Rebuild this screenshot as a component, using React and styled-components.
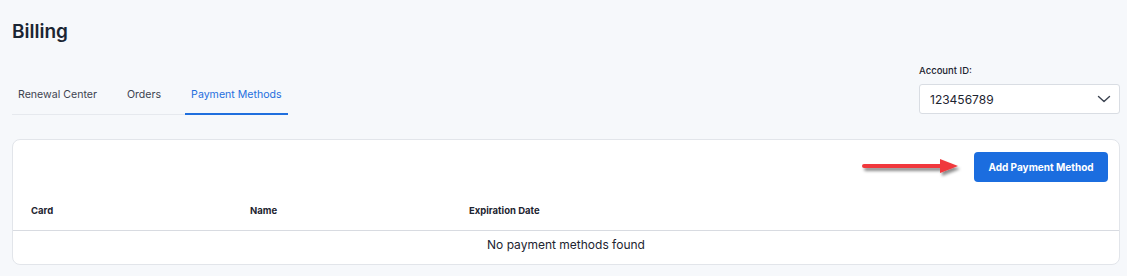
import React from "react";
import styled, { createGlobalStyle } from "styled-components";

const Global = createGlobalStyle`
  html, body { margin: 0; padding: 0; background: #f6f8fb; }
  body { font-family: Inter, "Noto Sans", Arial, sans-serif; color: #1d2430; }
  * { box-sizing: border-box; }
`;

const Page = styled.div`
  padding: 20px 7px 0 12px;
  width: 1127px;
`;

const Title = styled.h1`
  margin: 0;
  font-size: 19px;
  line-height: 24px;
  font-weight: 600;
  color: #1b2533;
`;

const HeaderRow = styled.div`
  display: flex;
  justify-content: space-between;
  align-items: flex-end;
  margin-top: 21px;
`;

const Tabs = styled.div`
  display: flex;
  gap: 18px;
  width: 276px;
  border-bottom: 1px solid #e6e9ee;
  height: 40px;
  margin-bottom: -1px;
`;

const Tab = styled.div`
  padding: 13px 6px 0;
  font-size: 10.6px;
  line-height: 14px;
  color: ${(p) => (p.$active ? "#1f6fde" : "#3d4350")};
  border-bottom: 2px solid ${(p) => (p.$active ? "#1f6fde" : "transparent")};
  margin-bottom: -1px;
  white-space: nowrap;
`;

const AccountBox = styled.div`
  display: flex;
  flex-direction: column;
  width: 201px;
`;

const Label = styled.label`
  font-size: 9.5px;
  font-weight: 500;
  color: #1d2430;
  line-height: 12px;
  margin-bottom: 7px;
`;

const Select = styled.div`
  height: 30px;
  background: #fff;
  border: 1px solid #d9dde3;
  border-radius: 3px;
  display: flex;
  align-items: center;
  justify-content: space-between;
  padding: 0 8px 0 10px;
  font-size: 12px;
  color: #1d2430;
`;

const Card = styled.div`
  margin-top: 25px;
  background: #fff;
  border: 1px solid #e2e5ea;
  border-radius: 8px;
  padding-bottom: 7px;
`;

const Toolbar = styled.div`
  display: flex;
  justify-content: flex-end;
  align-items: center;
  gap: 14px;
  padding: 12px 11px 0;
`;

const Button = styled.button`
  height: 30px;
  width: 134px;
  border: none;
  border-radius: 4px;
  background: #1b6ddf;
  color: #fff;
  font-family: inherit;
  font-size: 10px;
  font-weight: 700;
  cursor: pointer;
`;

const HeadRow = styled.div`
  display: grid;
  grid-template-columns: 219px 219px 219px 1fr;
  margin-top: 8px;
  height: 41px;
  align-items: center;
  border-bottom: 1px solid #d8dbe1;
`;

const HeadCell = styled.div`
  padding-left: 18px;
  font-size: 9.5px;
  font-weight: 700;
  color: #1d2430;
`;

const EmptyRow = styled.div`
  height: 26px;
  display: flex;
  align-items: center;
  justify-content: center;
  font-size: 12px;
  color: #1d2430;
`;

const Arrow = () => (
  <svg width="98" height="20" viewBox="0 0 98 20" style={{ overflow: "visible" }}>
    <defs>
      <filter id="sh" x="-20%" y="-100%" width="140%" height="300%">
        <feDropShadow dx="2" dy="3" stdDeviation="1.6" floodColor="#000" floodOpacity="0.45" />
      </filter>
    </defs>
    <g filter="url(#sh)">
      <line x1="2" y1="9" x2="80" y2="9" stroke="#f0393c" strokeWidth="4" strokeLinecap="round" />
      <polygon points="78,2 96,9 78,16" fill="#f0393c" />
    </g>
  </svg>
);

const Chevron = () => (
  <svg width="14" height="14" viewBox="0 0 14 14">
    <path d="M1.5 4.5 L7 9.5 L12.5 4.5" fill="none" stroke="#3b4250" strokeWidth="1.4" strokeLinecap="round" strokeLinejoin="round" />
  </svg>
);

export default function App() {
  return (
    <>
      <Global />
      <Page>
        <Title>Billing</Title>
        <HeaderRow>
          <Tabs>
            <Tab>Renewal Center</Tab>
            <Tab>Orders</Tab>
            <Tab $active>Payment Methods</Tab>
          </Tabs>
          <AccountBox>
            <Label>Account ID:</Label>
            <Select>
              <span>123456789</span>
              <Chevron />
            </Select>
          </AccountBox>
        </HeaderRow>
        <Card>
          <Toolbar>
            <Arrow />
            <Button>Add Payment Method</Button>
          </Toolbar>
          <HeadRow>
            <HeadCell>Card</HeadCell>
            <HeadCell>Name</HeadCell>
            <HeadCell>Expiration Date</HeadCell>
            <HeadCell />
          </HeadRow>
          <EmptyRow>No payment methods found</EmptyRow>
        </Card>
      </Page>
    </>
  );
}
